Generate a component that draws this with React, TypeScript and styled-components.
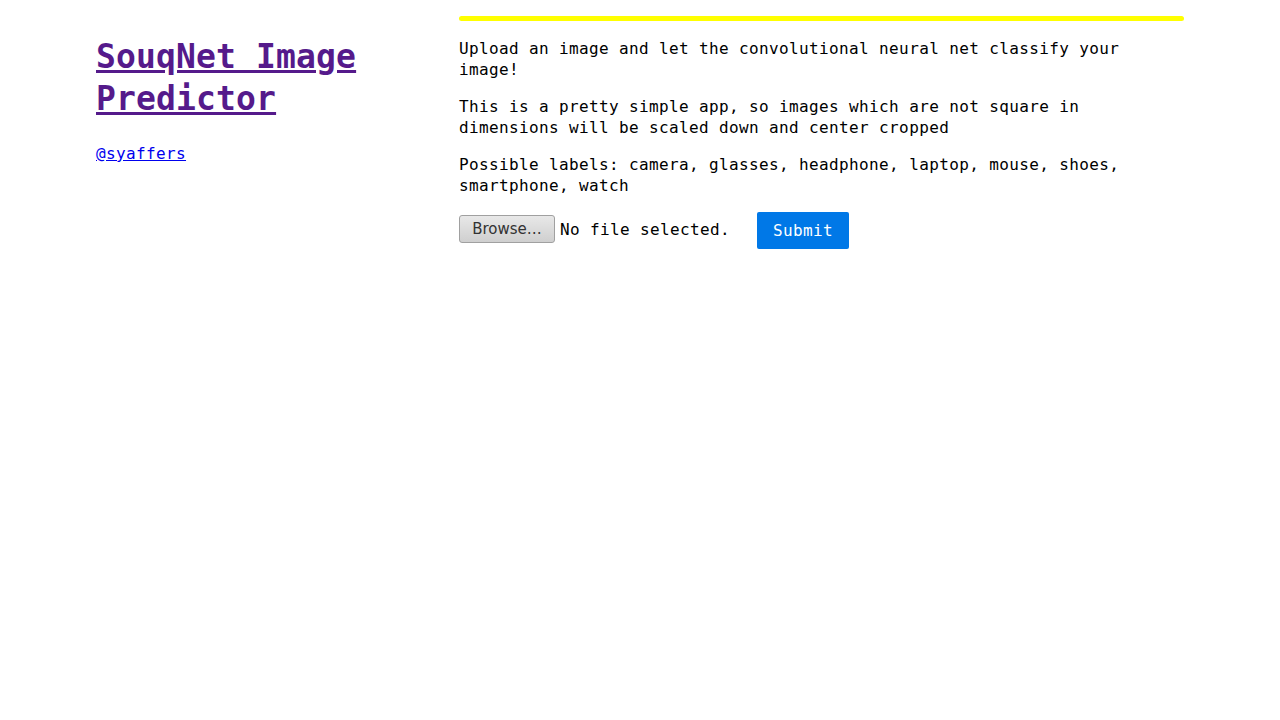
import React from "react";
import styled, { createGlobalStyle } from "styled-components";

const Global = createGlobalStyle`
  html, body { margin: 0; padding: 0; background: #fff; }
  body { font-family: "DejaVu Sans Mono", monospace; font-size: 16px; color: #000; letter-spacing: 0.37px; }
`;

const Page = styled.div`
  width: 1088px;
  margin: 0 auto;
  padding-top: 16px;
  display: grid;
  grid-template-columns: 363px 725px;
`;

const Side = styled.aside`
  padding-top: 20px;
`;

const Title = styled.h1`
  margin: 0;
  font-size: 33px;
  line-height: 42px;
  font-weight: bold;
  letter-spacing: 0.14px;
  a { color: #551a8b; text-decoration: underline; }
`;

const Handle = styled.p`
  margin: 23px 0 0;
  line-height: 21px;
  a { color: #0000ee; }
`;

const Main = styled.main`
  display: flex;
  flex-direction: column;
`;

const Bar = styled.div`
  height: 5px;
  border-radius: 3px;
  background: #ffff00;
  margin-bottom: 17px;
  width: 725px;
`;

const Para = styled.p`
  margin: 0 0 16px;
  line-height: 21px;
  font-size: 16px;
  max-width: 700px;
`;

const Form = styled.form`
  display: flex;
  align-items: center;
`;

const BrowseButton = styled.label`
  box-sizing: border-box;
  height: 28px;
  width: 96px;
  margin-bottom: 3px;
  display: flex;
  align-items: center;
  justify-content: center;
  border: 1px solid #a0a0a0;
  border-radius: 3px;
  background: linear-gradient(#e8e8e8, #cfcfcf);
  font-family: "DejaVu Sans", sans-serif;
  font-size: 15px;
  letter-spacing: 0;
  color: #333;
  cursor: pointer;
  input { display: none; }
`;

const FileName = styled.span`
  margin-left: 5px;
  margin-right: 27px;
  margin-bottom: 2px;
  line-height: 21px;
`;

const Submit = styled.button`
  background: rgb(0, 120, 231);
  color: #fff;
  border: none;
  border-radius: 2px;
  padding: 0 16px;
  height: 37px;
  font-family: "DejaVu Sans Mono", monospace;
  font-size: 16px;
  letter-spacing: 0.37px;
  cursor: pointer;
`;

export default function App() {
  return (
    <>
      <Global />
      <Page>
        <Side>
          <Title>
            <a href="#">SouqNet Image Predictor</a>
          </Title>
          <Handle>
            <a href="#">@syaffers</a>
          </Handle>
        </Side>
        <Main>
          <Bar />
          <Para>Upload an image and let the convolutional neural net classify your image!</Para>
          <Para>This is a pretty simple app, so images which are not square in dimensions will be scaled down and center cropped</Para>
          <Para>Possible labels: camera, glasses, headphone, laptop, mouse, shoes, smartphone, watch</Para>
          <Form onSubmit={(e) => e.preventDefault()}>
            <BrowseButton>
              Browse…
              <input type="file" />
            </BrowseButton>
            <FileName>No file selected.</FileName>
            <Submit type="submit">Submit</Submit>
          </Form>
        </Main>
      </Page>
    </>
  );
}
